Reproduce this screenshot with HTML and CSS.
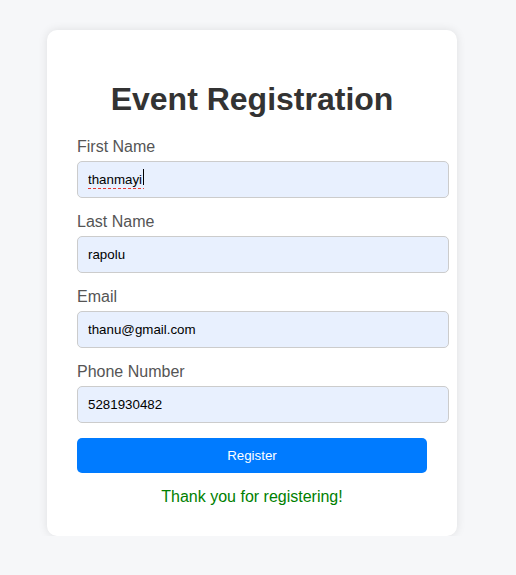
FILE: index.html
```html
<!DOCTYPE html>
<html>
<head>
<meta charset="utf-8">
<link rel="stylesheet" href="styles.css">
</head>
<body>
<div class="card">
  <h2 class="title">Event Registration</h2>
  <form class="form">
    <div class="group">
      <label class="label">First Name</label>
      <input class="input" type="text" value="thanmayi" spellcheck="false">
      <span class="squiggle"></span>
      <span class="caret"></span>
    </div>
    <div class="group">
      <label class="label">Last Name</label>
      <input class="input" type="text" value="rapolu">
    </div>
    <div class="group">
      <label class="label">Email</label>
      <input class="input" type="text" value="thanu@gmail.com">
    </div>
    <div class="group">
      <label class="label">Phone Number</label>
      <input class="input" type="text" value="5281930482">
    </div>
    <button class="btn" type="button">Register</button>
  </form>
  <p class="thanks">Thank you for registering!</p>
</div>
</body>
</html>
```
FILE: styles.css
```css
html, body {
  margin: 0;
  padding: 0;
}
body {
  background: #f6f7f9;
  font-family: "Liberation Sans", Arial, sans-serif;
  padding: 30px 0 0 47px;
}
.card {
  width: 350px;
  padding: 30px;
  background: #fff;
  border-radius: 10px;
  box-shadow: 0 0 10px rgba(0, 0, 0, 0.1);
}
.title {
  margin: 21px 0 20px;
  text-align: center;
  font-size: 32px;
  color: #333;
}
.group {
  position: relative;
  margin-bottom: 15px;
}
.label {
  display: block;
  font-size: 16px;
  color: #555;
  margin-bottom: 5px;
}
.input {
  display: block;
  width: 100%;
  box-sizing: content-box;
  padding: 10px;
  margin: 0;
  border: 1px solid #ccc;
  border-radius: 5px;
  background: #e8f0fe;
  font-family: "Liberation Sans", Arial, sans-serif;
  font-size: 13.333px;
  color: #000;
  outline: none;
}
.squiggle {
  position: absolute;
  left: 11px;
  top: 50px;
  width: 56px;
  height: 1px;
  background: repeating-linear-gradient(90deg, #e53935 0 3px, transparent 3px 5px);
}
.caret {
  position: absolute;
  left: 66px;
  top: 31px;
  width: 1px;
  height: 16px;
  background: #000;
}
.btn {
  display: block;
  width: 100%;
  padding: 10px;
  border: none;
  border-radius: 5px;
  background: #007bff;
  color: #fff;
  font-family: "Liberation Sans", Arial, sans-serif;
  font-size: 13.333px;
  margin-top: 15px;
}
.thanks {
  margin: 15px 0 0;
  text-align: center;
  font-size: 16px;
  color: #008000;
}
```
